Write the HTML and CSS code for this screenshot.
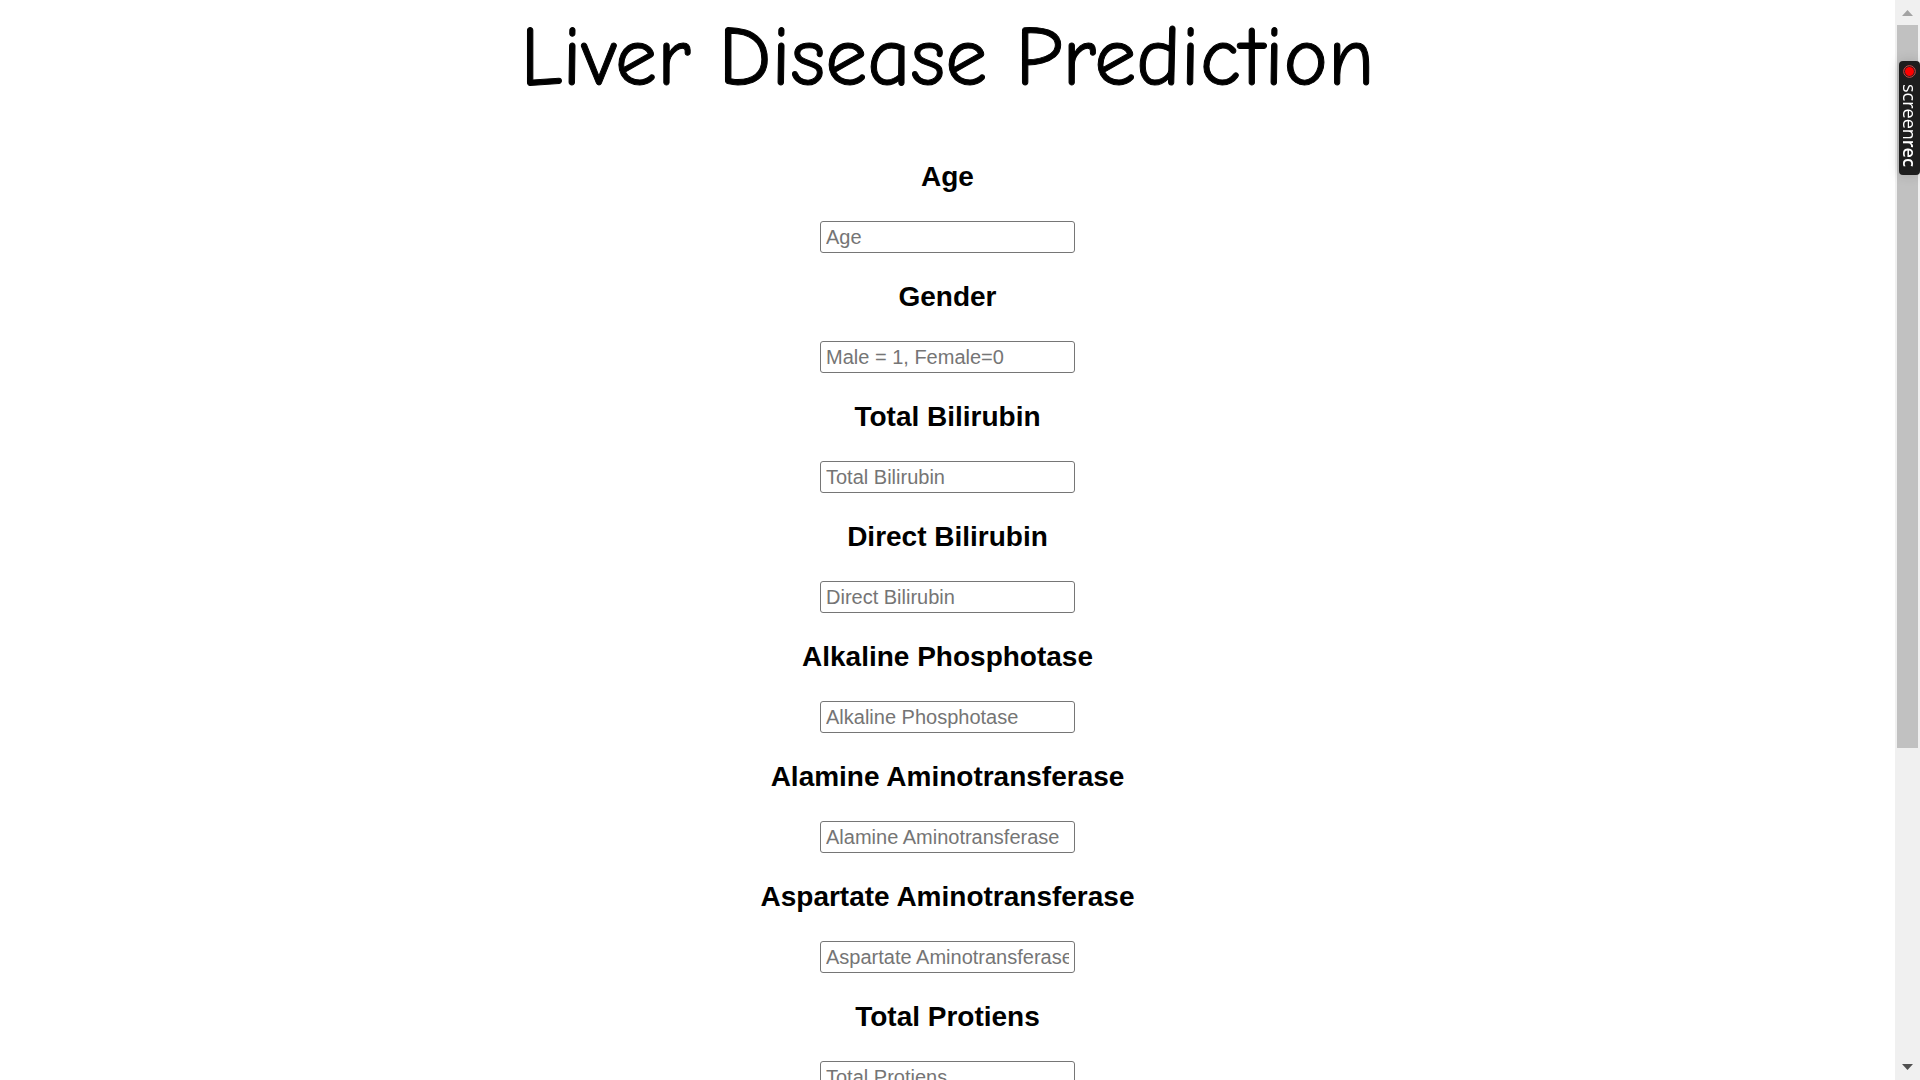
FILE: index.html
```html
<!DOCTYPE html>
<html lang="en">
<head>
<meta charset="utf-8">
<title>Liver Disease Prediction</title>
<link rel="stylesheet" href="styles.css">
</head>
<body>
<div class="window">
  <main class="page">
    <h1 class="title">Liver Disease Prediction</h1>
    <form class="form">
      <div class="field"><label for="age">Age</label><input id="age" type="text" placeholder="Age"></div>
      <div class="field"><label for="gender">Gender</label><input id="gender" type="text" placeholder="Male = 1, Female=0"></div>
      <div class="field"><label for="tb">Total Bilirubin</label><input id="tb" type="text" placeholder="Total Bilirubin"></div>
      <div class="field"><label for="db">Direct Bilirubin</label><input id="db" type="text" placeholder="Direct Bilirubin"></div>
      <div class="field"><label for="ap">Alkaline Phosphotase</label><input id="ap" type="text" placeholder="Alkaline Phosphotase"></div>
      <div class="field"><label for="alt">Alamine Aminotransferase</label><input id="alt" type="text" placeholder="Alamine Aminotransferase"></div>
      <div class="field"><label for="ast">Aspartate Aminotransferase</label><input id="ast" type="text" placeholder="Aspartate Aminotransferase"></div>
      <div class="field"><label for="tp">Total Protiens</label><input id="tp" type="text" placeholder="Total Protiens"></div>
    </form>
  </main>
  <div class="scrollbar" aria-hidden="true">
    <svg class="arrow" viewBox="0 0 25 25"><path d="M7 16h11l-5.500-6z" fill="#a3a3a3"/></svg>
    <div class="track"><div class="thumb"></div></div>
    <svg class="arrow" viewBox="0 0 25 25"><path d="M7 9h11l-5.500 6z" fill="#505050"/></svg>
  </div>
</div>
<button class="recorder" type="button">
  <svg class="dot" viewBox="0 0 13 13"><circle cx="6.500" cy="6.500" r="5.800" fill="#1d1d1d" stroke="#d94a4a" stroke-width="1"/><circle cx="6.500" cy="6.500" r="4.500" fill="#f00"/></svg>
  <span>screen<b>rec</b></span>
</button>
</body>
</html>
```
FILE: styles.css
```css
* {
  box-sizing: border-box;
}

body {
  margin: 0;
  background: #fff;
  color: #000;
  font-family: Arial, "Liberation Sans", sans-serif;
}

.window {
  display: flex;
  height: 100vh;
  overflow: hidden;
}

.page {
  flex: 1;
  overflow-y: auto;
  scrollbar-width: none;
}

.title {
  margin: 0;
  padding-top: 8px;
  font-family: "Comic Sans MS", "Comic Neue", Lato, sans-serif;
  font-size: 84px;
  font-weight: 400;
  line-height: 100px;
  text-align: center;
  -webkit-text-stroke: 1px #000;
}

.form {
  display: flex;
  flex-direction: column;
  gap: 28px;
  padding: 53px 0 28px;
}

.field {
  display: flex;
  flex-direction: column;
  align-items: center;
  gap: 28px;
}

.field label {
  font-size: 28px;
  font-weight: 700;
  line-height: 32px;
}

.field input {
  width: 255px;
  height: 32px;
  padding: 1px 5px;
  border: 1px solid #767676;
  border-radius: 3px;
  background: #fff;
  font: 20px Arial, "Liberation Sans", sans-serif;
}

.field input::placeholder {
  color: #757575;
}

.scrollbar {
  display: flex;
  flex-direction: column;
  width: 25px;
  background: #f0f0f0;
}

.arrow {
  width: 25px;
  height: 25px;
}

.track {
  flex: 1;
  padding: 0 2px;
}

.thumb {
  height: 70.2%;
  background: #c1c1c1;
}

.recorder {
  position: fixed;
  top: 61px;
  right: 0;
  display: flex;
  flex-direction: column;
  align-items: center;
  gap: 6px;
  width: 21px;
  height: 114px;
  padding: 4px 0;
  border: 0;
  border-radius: 4px;
  background: #1d1d1d;
  box-shadow: 0 0 12px rgba(0, 0, 0, 0.15);
  color: #fff;
  font: 18px "Open Sans", "Noto Sans", sans-serif;
}

.recorder span {
  line-height: 18px;
  writing-mode: vertical-rl;
}

.recorder b {
  font-weight: 600;
}

.dot {
  flex: none;
  width: 13px;
  height: 13px;
}
```
